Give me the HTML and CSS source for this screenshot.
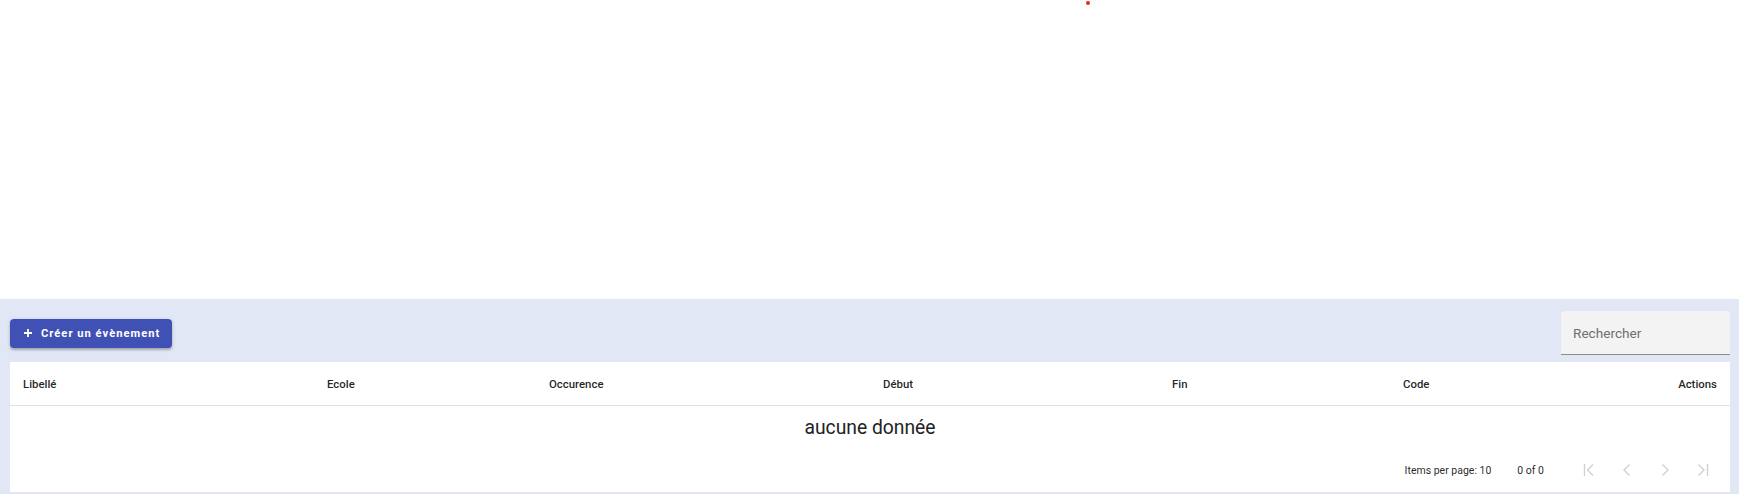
FILE: index.html
```html
<!DOCTYPE HTML>
<html>
<head>
    <title>Evènements</title>
    <link rel="stylesheet" href="styles.css">
</head>
<body>
    <div class="top">
        <span class="dot"></span>
    </div>
    <div class="content">
        <div class="toolbar">
            <button class="btn-create" type="button">
                <svg class="plus" width="10" height="10" viewBox="0 0 10 10"><path d="M5 1v8M1 5h8" stroke="#fff" stroke-width="1.8"/></svg>
                <span>Créer un évènement</span>
            </button>
            <div class="search">
                <input type="text" placeholder="Rechercher">
            </div>
        </div>
        <div class="table">
            <div class="head">
                <div>Libellé</div>
                <div>Ecole</div>
                <div>Occurence</div>
                <div>Début</div>
                <div>Fin</div>
                <div>Code</div>
                <div class="right">Actions</div>
            </div>
            <div class="empty">aucune donnée</div>
            <div class="paginator">
                <span class="per-page">Items per page: 10</span>
                <span class="range">0 of 0</span>
                <span class="pg-btn">
                    <svg width="12" height="14" viewBox="0 0 12 14"><path d="M1.5 1v12M10 1.5L4.5 7l5.5 5.5" fill="none" stroke="#cfcfcf" stroke-width="1.3"/></svg>
                </span>
                <span class="pg-btn">
                    <svg width="12" height="14" viewBox="0 0 12 14"><path d="M8.5 1.5L3 7l5.5 5.5" fill="none" stroke="#cfcfcf" stroke-width="1.3"/></svg>
                </span>
                <span class="pg-btn">
                    <svg width="12" height="14" viewBox="0 0 12 14"><path d="M3.5 1.5L9 7l-5.5 5.5" fill="none" stroke="#cfcfcf" stroke-width="1.3"/></svg>
                </span>
                <span class="pg-btn">
                    <svg width="12" height="14" viewBox="0 0 12 14"><path d="M1.5 1.5L7 7l-5.5 5.5M10.5 1v12" fill="none" stroke="#cfcfcf" stroke-width="1.3"/></svg>
                </span>
            </div>
        </div>
    </div>
</body>
</html>
```

FILE: styles.css
```css
body {
    margin: 0;
    font-family: Roboto, "Liberation Sans", sans-serif;
    color: rgba(0, 0, 0, 0.87);
    background: #fff;
}

.top {
    height: 299px;
    position: relative;
}

.dot {
    position: absolute;
    left: 1086px;
    top: 1px;
    width: 4px;
    height: 4px;
    border-radius: 50%;
    background: #e8232b;
}

.content {
    background: #e1e7f5;
    padding: 12px 9px 2px 10px;
}

.toolbar {
    display: flex;
    align-items: center;
    justify-content: space-between;
    height: 44px;
    margin-bottom: 7px;
}

.btn-create {
    display: flex;
    align-items: center;
    gap: 8px;
    height: 29px;
    width: 162px;
    padding: 0 0 0 13px;
    border: none;
    border-radius: 4px;
    background: #3f51b5;
    color: #fff;
    font-family: Roboto, sans-serif;
    font-size: 11.2px;
    font-weight: 700;
    letter-spacing: 1px;
    box-shadow: 0 2px 2px rgba(0, 0, 0, 0.2), 0 1px 4px rgba(0, 0, 0, 0.14);
}

.search {
    width: 169px;
    height: 44px;
    background: #f3f3f3;
    border-radius: 4px 4px 0 0;
    border-bottom: 1px solid #8b8b8b;
    box-sizing: border-box;
}

.search input {
    width: 100%;
    height: 100%;
    box-sizing: border-box;
    border: none;
    background: transparent;
    padding: 0 12px;
    font-family: Roboto, sans-serif;
    font-size: 13.6px;
    outline: none;
}

.search input::placeholder {
    color: #6f6f6f;
}

.table {
    background: #fff;
    height: 130px;
}

.head {
    display: grid;
    grid-template-columns: 304px 222px 334px 289px 231px 200px 1fr;
    align-items: center;
    height: 43px;
    padding: 0 13px;
    border-bottom: 1px solid #e0e0e0;
    font-size: 11.4px;
    font-weight: 500;
}

.head .right {
    text-align: right;
}

.empty {
    height: 42px;
    display: flex;
    align-items: center;
    justify-content: center;
    font-size: 19.3px;
    color: #222;
}

.paginator {
    display: flex;
    align-items: center;
    justify-content: flex-end;
    height: 44px;
    padding-right: 8px;
    font-size: 10.5px;
}

.per-page {
    margin-right: 26px;
}

.range {
    margin-right: 26px;
}

.pg-btn {
    width: 38px;
    display: flex;
    justify-content: center;
    align-items: center;
}
```
